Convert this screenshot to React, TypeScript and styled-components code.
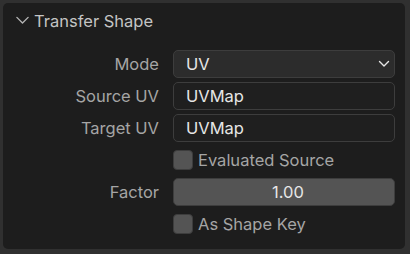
import styled, { createGlobalStyle } from 'styled-components';

const GlobalStyle = createGlobalStyle`
    html, body {
        margin: 0;
        padding: 0;
        background: #303030;
    }

    body {
        font-family: Inter, "Noto Sans", "DejaVu Sans", sans-serif;
        font-size: 16.5px;
    }
`;

const Page = styled.div`
    width: 410px;
    height: 254px;
    padding: 3px 5px 5px 3px;
    box-sizing: border-box;
`;

const Panel = styled.div`
    height: 100%;
    background: #1d1d1d;
    border-radius: 5px;
    box-sizing: border-box;
    padding: 0 10px 0 0;
`;

const Header = styled.div`
    display: flex;
    align-items: center;
    gap: 4px;
    height: 35px;
    padding-left: 12px;
    color: #c4c4c4;
    font-size: 16.5px;
`;

const Body = styled.div`
    display: grid;
    grid-template-columns: 156px 1fr;
    column-gap: 14px;
    row-gap: 4px;
    padding-top: 12px;
`;

const Label = styled.div`
    display: flex;
    align-items: center;
    justify-content: flex-end;
    height: 28px;
    color: #a5a5a5;
`;

const Field = styled.div<{ $kind: 'menu' | 'text' | 'slider' }>`
    display: flex;
    align-items: center;
    justify-content: ${p => (p.$kind === 'slider' ? 'center' : 'space-between')};
    height: 28px;
    box-sizing: border-box;
    padding: 0 4px 0 12px;
    border-radius: 5px;
    border: 1px solid #3d3d3d;
    color: #e6e6e6;
    background: ${p => (p.$kind === 'menu' ? '#2c2c2c' : p.$kind === 'slider' ? '#545454' : '#1f1f1f')};
`;

const CheckRow = styled.label`
    grid-column: 2;
    display: flex;
    align-items: center;
    gap: 5px;
    height: 28px;
    color: #a5a5a5;
`;

const Box = styled.span`
    width: 20px;
    height: 20px;
    box-sizing: border-box;
    border-radius: 4px;
    border: 1px solid #3d3d3d;
    background: #545454;
`;

const Chevron = ({ size, color, width }: { size: number; color: string; width: number }) => (
    <svg width={size} height={size} viewBox="0 0 12 12" fill="none">
        <path d="M1.5 3.5 L6 8 L10.5 3.5" stroke={color} strokeWidth={width} strokeLinecap="round" strokeLinejoin="round" />
    </svg>
);

export default function App() {
    return (
        <Page>
            <GlobalStyle />
            <Panel>
                <Header>
                    <Chevron size={15} color="#b4b4b4" width={1.1} />
                    Transfer Shape
                </Header>
                <Body>
                    <Label>Mode</Label>
                    <Field $kind="menu">
                        UV
                        <Chevron size={12} color="#e6e6e6" width={1.4} />
                    </Field>

                    <Label>Source UV</Label>
                    <Field $kind="text">UVMap</Field>

                    <Label>Target UV</Label>
                    <Field $kind="text">UVMap</Field>

                    <CheckRow>
                        <Box />
                        Evaluated Source
                    </CheckRow>

                    <Label>Factor</Label>
                    <Field $kind="slider">1.00</Field>

                    <CheckRow>
                        <Box />
                        As Shape Key
                    </CheckRow>
                </Body>
            </Panel>
        </Page>
    );
}
